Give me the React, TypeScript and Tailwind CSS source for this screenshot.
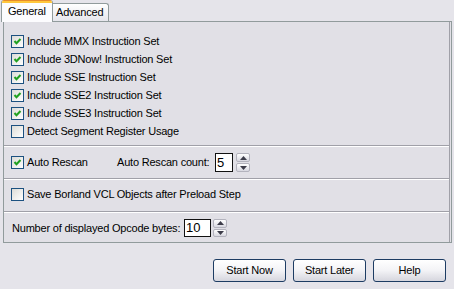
import React from 'react';

const font = { fontFamily: '"Liberation Sans", Arial, sans-serif' };

// XP-style checkbox
const Check: React.FC<{ checked?: boolean }> = ({ checked }) => (
    <div className="w-[13px] h-[13px] shrink-0 border border-[#1c5180] bg-gradient-to-br from-[#dcdcd7] to-white flex items-center justify-center">
        {checked && (
            <svg width="11" height="11" viewBox="0 0 11 11">
                <polyline points="2.5,5 4.5,7.3 8.5,3" fill="none" stroke="#21a121" strokeWidth="2" />
            </svg>
        )}
    </div>
);

const CheckRow: React.FC<{ checked?: boolean; label: string }> = ({ checked, label }) => (
    <div className="flex items-center h-[13px]">
        <Check checked={checked} />
        <span className="ml-[3px] leading-none whitespace-nowrap">{label}</span>
    </div>
);

const Arrow: React.FC<{ up?: boolean }> = ({ up }) => (
    <div className="flex-1 rounded-[2px] border border-[#b3b3bd] bg-gradient-to-b from-white to-[#d8d8e0] flex items-center justify-center">
        <svg width="7" height="4" viewBox="0 0 7 4">
            <polygon points={up ? '0,4 7,4 3.5,0' : '0,0 7,0 3.5,4'} fill="#3d3d4a" />
        </svg>
    </div>
);

const Spin: React.FC = () => (
    <div className="w-[14px] h-full flex flex-col gap-px">
        <Arrow up />
        <Arrow />
    </div>
);

const Separator = () => (
    <>
        <div className="h-px bg-[#a0a0a8]" />
        <div className="h-px bg-white" />
    </>
);

const XPButton: React.FC<{ label: string }> = ({ label }) => (
    <button className="w-[73px] h-[23px] rounded-[3px] border border-[#1d3c63] bg-gradient-to-b from-white via-[#f3f3f6] to-[#d6d6de] text-[11px] text-black leading-none">
        {label}
    </button>
);

export default function App() {
    return (
        <div className="w-[454px] h-[289px] bg-[#e5e4ea] text-black text-[11px] tracking-[-0.2px] overflow-hidden" style={font}>
            {/* Tabs */}
            <div className="flex items-end h-[21px] pl-[1px]">
                <div className="relative z-10 w-[52px] h-[22px] -mb-px bg-[#fcfcfe] border-x border-[#919b9c] rounded-t-[3px] overflow-hidden">
                    <div className="h-px bg-[#e68b2c]" />
                    <div className="h-[2px] bg-[#ffc73c]" />
                    <div className="pl-[6px] pt-[3px] leading-none">General</div>
                </div>
                <div className="ml-[-1px] w-[57px] h-[18px] bg-gradient-to-b from-white to-[#e6e6ec] border-t border-r border-[#919b9c] rounded-tr-[3px] pl-[4px] pt-[3px] leading-none">
                    Advanced
                </div>
            </div>

            {/* Tab page */}
            <div className="ml-[3px] w-[449px] h-[222px] border border-[#919b9c] bg-[#e1e0e6]">
                <div className="border-r border-[#a0a0a8] mr-px h-full flex flex-col">
                    <div className="pt-[13px] pb-[7px] pl-[7px] flex flex-col gap-[5px]">
                        <CheckRow checked label="Include MMX Instruction Set" />
                        <CheckRow checked label="Include 3DNow! Instruction Set" />
                        <CheckRow checked label="Include SSE Instruction Set" />
                        <CheckRow checked label="Include SSE2 Instruction Set" />
                        <CheckRow checked label="Include SSE3 Instruction Set" />
                        <CheckRow label="Detect Segment Register Usage" />
                    </div>
                    <Separator />
                    <div className="pt-[6px] pb-[6px] pl-[7px]">
                        <div className="flex items-center h-[19px]">
                            <div className="w-[106px] flex items-center">
                                <Check checked />
                                <span className="ml-[3px] whitespace-nowrap">Auto Rescan</span>
                            </div>
                            <span className="w-[98px] whitespace-nowrap">Auto Rescan count:</span>
                            <div className="w-[18px] h-[19px] bg-white border border-[#111] text-[13px] tracking-normal leading-[17px] pl-[1px]">5</div>
                            <div className="ml-[3px] h-[19px]">
                                <Spin />
                            </div>
                        </div>
                    </div>
                    <Separator />
                    <div className="pt-[5px] pb-[7px] pl-[7px]">
                        <div className="flex items-center h-[19px]">
                            <Check />
                            <span className="ml-[3px] whitespace-nowrap">Save Borland VCL Objects after Preload Step</span>
                        </div>
                    </div>
                    <Separator />
                    <div className="pt-[6px] pl-[8px]">
                        <div className="flex items-center h-[18px]">
                            <span className="w-[172px] whitespace-nowrap">Number of displayed Opcode bytes:</span>
                            <div className="w-[27px] h-[18px] bg-white border border-[#111] text-[13px] tracking-normal leading-[16px] pl-[1px]">10</div>
                            <div className="ml-[2px] h-[18px]">
                                <Spin />
                            </div>
                        </div>
                    </div>
                </div>
            </div>

            {/* Buttons */}
            <div className="flex justify-end gap-[7px] pr-[8px] mt-[16px]">
                <XPButton label="Start Now" />
                <XPButton label="Start Later" />
                <XPButton label="Help" />
            </div>
        </div>
    );
}
